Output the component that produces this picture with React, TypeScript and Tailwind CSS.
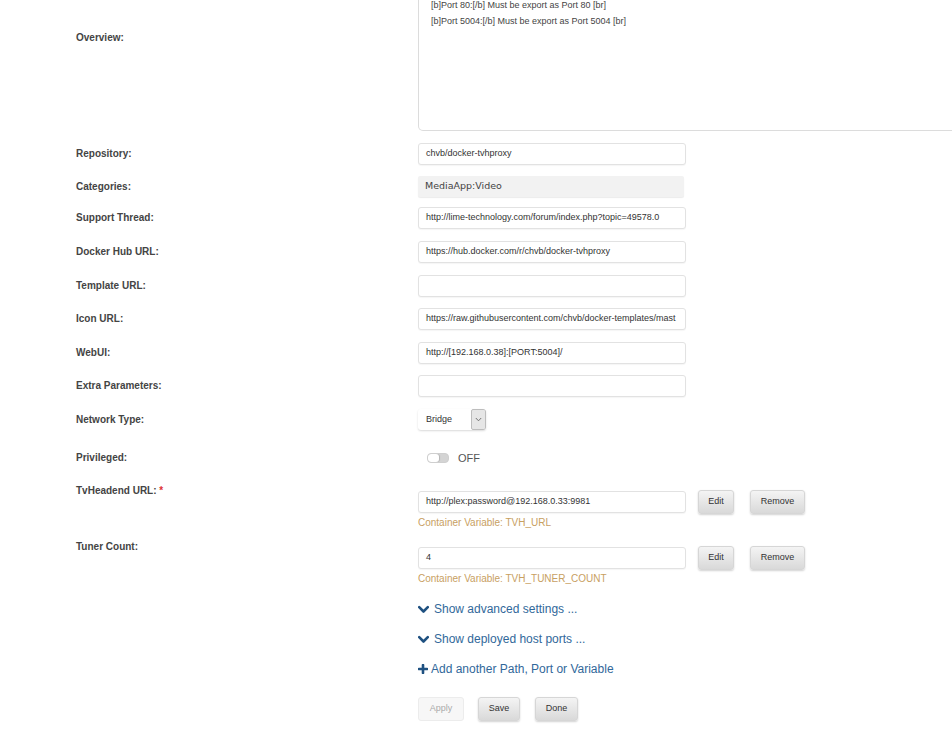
import React from "react";

const font = { fontFamily: '"Liberation Sans", Arial, sans-serif' };

function Label({ children }: { children: React.ReactNode }) {
  return (
    <div className="w-[342px] shrink-0 text-[10px] font-bold leading-[12px] text-[#444]">
      {children}
    </div>
  );
}

function Field({ value }: { value?: string }) {
  return (
    <div className="flex h-[22px] w-[268px] items-center overflow-hidden whitespace-nowrap rounded-[3px] border border-[#e2e2e2] bg-white pl-[7px] text-[9px] text-[#333] shadow-[0_1px_1px_rgba(0,0,0,0.04)]">
      {value}
    </div>
  );
}

function GrayButton({ children, w }: { children: React.ReactNode; w: string }) {
  return (
    <div
      className={`flex h-[24px] ${w} items-center justify-center rounded-[3px] border border-[#d6d6d6] bg-gradient-to-b from-[#f4f4f4] to-[#d9d9d9] text-[9px] text-[#333] shadow-[0_1px_2px_rgba(0,0,0,0.18)]`}
    >
      {children}
    </div>
  );
}

function Row({ label, children, cls }: { label: React.ReactNode; children: React.ReactNode; cls: string }) {
  return (
    <div className={`flex items-center ${cls}`}>
      <Label>{label}</Label>
      {children}
    </div>
  );
}

function Chevron() {
  return (
    <svg width="11" height="9" viewBox="0 0 11 9" className="mr-[5px]">
      <path d="M1.2 2.2 L5.5 6.5 L9.8 2.2" fill="none" stroke="#1f5181" strokeWidth="2.6" strokeLinecap="round" strokeLinejoin="round" />
    </svg>
  );
}

function Plus() {
  return (
    <svg width="10" height="10" viewBox="0 0 10 10" className="mr-[3px]">
      <path d="M5 1 V9 M1 5 H9" fill="none" stroke="#1f5181" strokeWidth="2.6" strokeLinecap="round" />
    </svg>
  );
}

export default function App() {
  return (
    <div className="h-[750px] w-[952px] overflow-hidden bg-white" style={font}>
      <div className="pl-[76px]">
        {/* Overview */}
        <div className="flex items-start">
          <div className="w-[342px] shrink-0 pt-[32px] text-[10px] font-bold leading-[12px] text-[#444]">Overview:</div>
          <div className="h-[131px] w-[560px] shrink-0 rounded-bl-[5px] border-x border-b border-[#dcdcdc] bg-white pl-[12px] text-[9px] leading-[16px] text-[#444]">
            <div className="-mt-[3px]">[b]Port 80:[/b] Must be export as Port 80 [br]</div>
            <div>[b]Port 5004:[/b] Must be export as Port 5004 [br]</div>
          </div>
        </div>

        <Row label="Repository:" cls="mt-[12px]">
          <Field value="chvb/docker-tvhproxy" />
        </Row>
        <Row label="Categories:" cls="mt-[11px]">
          <div
            className="flex h-[21px] w-[266px] items-center rounded-[2px] bg-[#f2f2f2] pl-[7px] text-[9.5px] text-[#444] shadow-[0_1px_1px_rgba(0,0,0,0.08)]"
            style={{ fontFamily: '"DejaVu Sans", sans-serif' }}
          >
            MediaApp:Video
          </div>
        </Row>
        <Row label="Support Thread:" cls="mt-[10px]">
          <Field value="http://lime-technology.com/forum/index.php?topic=49578.0" />
        </Row>
        <Row label="Docker Hub URL:" cls="mt-[12px]">
          <Field value="https://hub.docker.com/r/chvb/docker-tvhproxy" />
        </Row>
        <Row label="Template URL:" cls="mt-[12px]">
          <Field value="" />
        </Row>
        <Row label="Icon URL:" cls="mt-[11px]">
          <Field value="https://raw.githubusercontent.com/chvb/docker-templates/mast" />
        </Row>
        <Row label="WebUI:" cls="mt-[12px]">
          <Field value="http://[192.168.0.38]:[PORT:5004]/" />
        </Row>
        <Row label="Extra Parameters:" cls="mt-[11px]">
          <Field value="" />
        </Row>
        <Row label="Network Type:" cls="mt-[12px]">
          <div className="flex h-[21px] w-[68px] items-stretch overflow-hidden rounded-[3px] bg-white shadow-[0_1px_2px_rgba(0,0,0,0.15)]">
            <div className="flex flex-1 items-center pl-[8px] text-[9px] text-[#333]">Bridge</div>
            <div className="flex w-[15px] items-center justify-center rounded-[2px] border border-[#bdbdbd] bg-[#e6e6e6]">
              <svg width="7" height="5" viewBox="0 0 7 5">
                <path d="M0.8 1 L3.5 3.8 L6.2 1" fill="none" stroke="#666" strokeWidth="0.9" />
              </svg>
            </div>
          </div>
        </Row>
        <Row label="Privileged:" cls="mt-[18px] h-[20px]">
          <div className="flex items-center pl-[9px]">
            <div className="flex h-[10px] w-[22px] overflow-hidden rounded-[4px] border border-[#cfcfcf] bg-[#d4d4d4]">
              <div className="h-full w-[11px] rounded-[3px] bg-white shadow-[1px_0_1px_rgba(0,0,0,0.15)]" />
            </div>
            <span className="ml-[9px] text-[11px] text-[#555]">OFF</span>
          </div>
        </Row>

        {/* TvHeadend URL */}
        <div className="mt-[22px] flex items-start">
          <div className="-mt-[5px] w-[342px] shrink-0 text-[10px] font-bold leading-[12px] text-[#444]">
            TvHeadend URL: <span className="text-[#d33]">*</span>
          </div>
          <div>
            <div className="flex items-center">
              <Field value="http://plex:password@192.168.0.33:9981" />
              <div className="ml-[12px]">
                <GrayButton w="w-[36px]">Edit</GrayButton>
              </div>
              <div className="ml-[16px]">
                <GrayButton w="w-[55px]">Remove</GrayButton>
              </div>
            </div>
            <div className="mt-[3px] text-[10px] leading-[12px] text-[#c8a062]">Container Variable: TVH_URL</div>
          </div>
        </div>

        {/* Tuner Count */}
        <div className="mt-[17px] flex items-start">
          <div className="-mt-[5px] w-[342px] shrink-0 text-[10px] font-bold leading-[12px] text-[#444]">Tuner Count:</div>
          <div>
            <div className="flex items-center">
              <Field value="4" />
              <div className="ml-[12px]">
                <GrayButton w="w-[36px]">Edit</GrayButton>
              </div>
              <div className="ml-[16px]">
                <GrayButton w="w-[55px]">Remove</GrayButton>
              </div>
            </div>
            <div className="mt-[3px] text-[10px] leading-[12px] text-[#c8a062]">Container Variable: TVH_TUNER_COUNT</div>
          </div>
        </div>

        <div className="pl-[342px]">
          <div className="mt-[16px] flex h-[16px] items-center text-[12px] text-[#31689a]">
            <Chevron />
            Show advanced settings ...
          </div>
          <div className="mt-[14px] flex h-[16px] items-center text-[12px] text-[#31689a]">
            <Chevron />
            Show deployed host ports ...
          </div>
          <div className="mt-[14px] flex h-[16px] items-center text-[12px] text-[#31689a]">
            <Plus />
            Add another Path, Port or Variable
          </div>
          <div className="mt-[20px] flex items-center">
            <div className="flex h-[24px] w-[46px] items-center justify-center rounded-[3px] border border-[#ececec] bg-[#f7f7f7] text-[9px] text-[#aaa]">
              Apply
            </div>
            <div className="ml-[14px]">
              <GrayButton w="w-[42px]">Save</GrayButton>
            </div>
            <div className="ml-[15px]">
              <GrayButton w="w-[43px]">Done</GrayButton>
            </div>
          </div>
        </div>
      </div>
    </div>
  );
}
